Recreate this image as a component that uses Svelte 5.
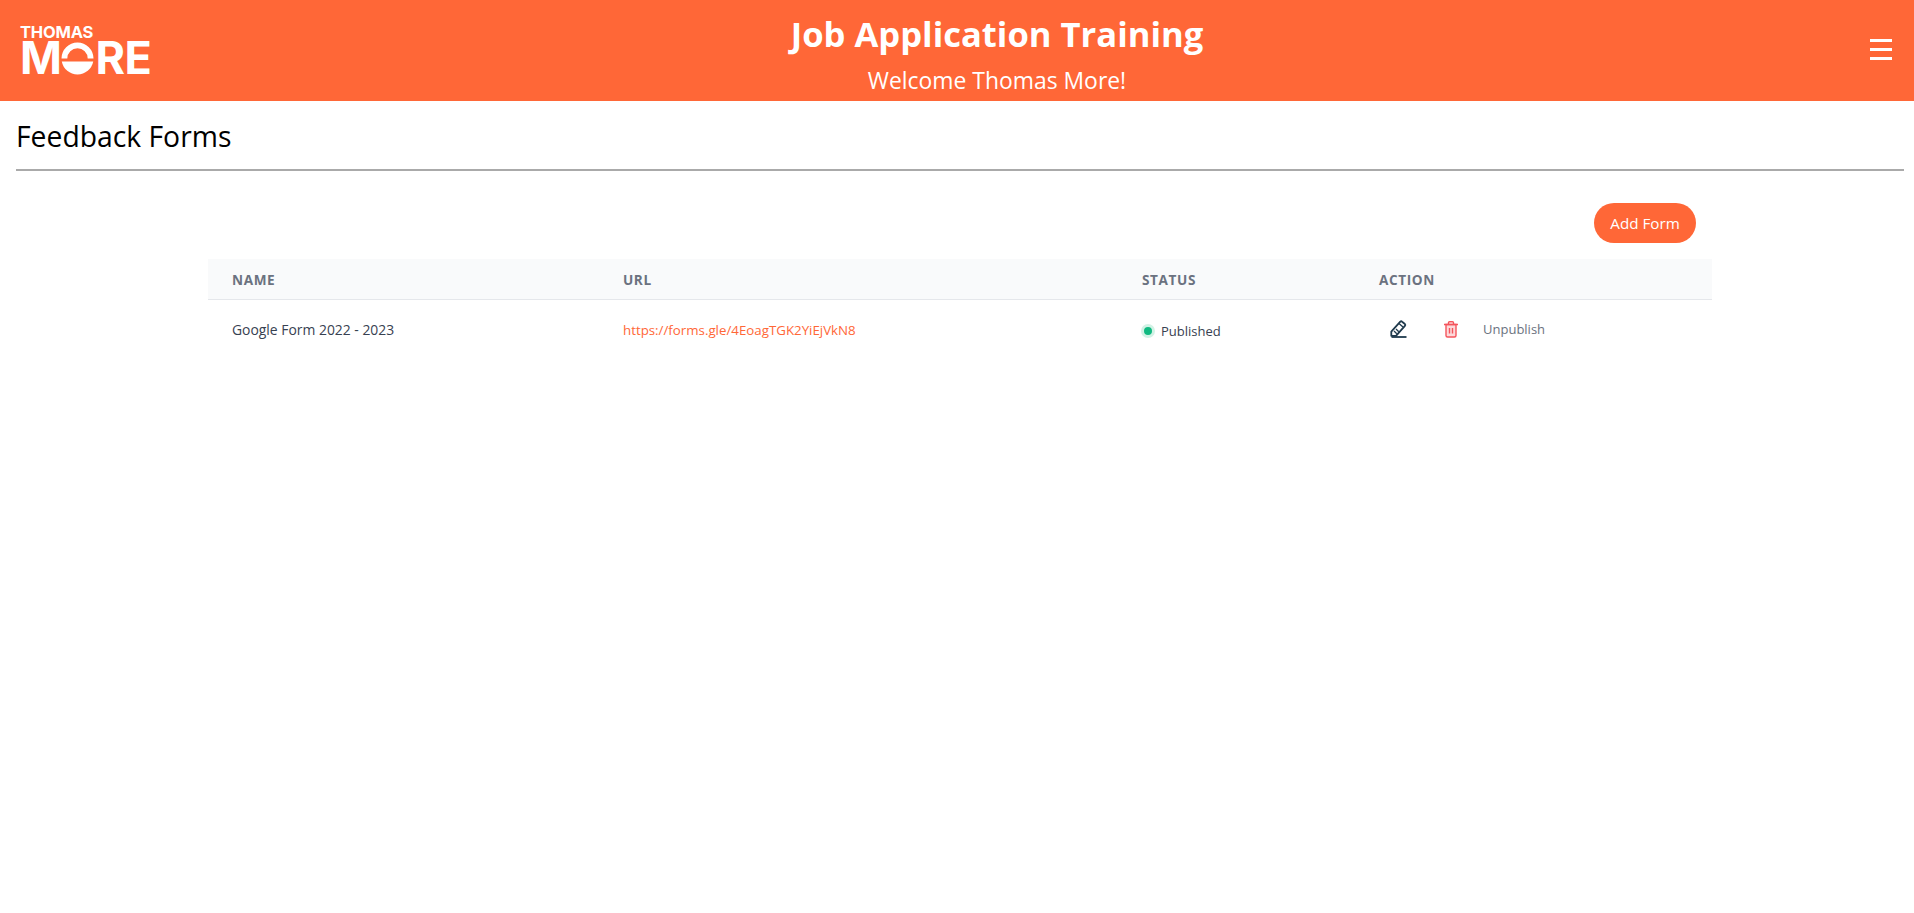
<script>
  const forms = [
    { name: 'Google Form 2022 - 2023', url: 'https://forms.gle/4EoagTGK2YiEjVkN8', status: 'Published' }
  ];
</script>

<header class="topbar">
  <div class="logo">
    <span class="logo-small">THOMAS</span>
    <span class="logo-big">
      <span class="m">M</span><svg class="logo-o" viewBox="0 0 34 34" aria-hidden="true">
        <path d="M3.500 17A13.500 13.500 0 0 1 30.500 17" fill="none" stroke="#fff" stroke-width="6" />
        <path d="M.8 20H33.200A16.500 16.500 0 0 1 .8 20z" fill="#fff" />
      </svg><span>RE</span>
    </span>
  </div>
  <div class="titles">
    <h1>Job Application Training</h1>
    <p>Welcome Thomas More!</p>
  </div>
  <button class="burger" aria-label="Menu">
    <span></span><span></span><span></span>
  </button>
</header>

<main>
  <h2 class="page-title">Feedback Forms</h2>
  <hr />

  <section class="content">
    <div class="toolbar">
      <button class="add-btn">Add Form</button>
    </div>

    <table>
      <thead>
        <tr>
          <th class="col-name">Name</th>
          <th class="col-url">Url</th>
          <th class="col-status">Status</th>
          <th>Action</th>
        </tr>
      </thead>
      <tbody>
        {#each forms as form}
          <tr>
            <td class="name">{form.name}</td>
            <td><a href={form.url}>{form.url}</a></td>
            <td>
              <span class="status"><i class="dot"></i>{form.status}</span>
            </td>
            <td>
              <div class="actions">
                <svg class="edit" viewBox="0 0 20 20" width="20" height="20" aria-hidden="true">
                  <path d="M3.300 12.700 12.300 2.700a1.300 1.300 0 0 1 1.800 0l2.800 2.300a1.300 1.300 0 0 1 0 1.800l-8.900 10H3.300z" fill="none" stroke="#1f3a4d" stroke-width="1.800" stroke-linejoin="round" />
                  <path d="M11 4.500l4 3.500M6 12l2.800 2.800M8 10l2.800 2.800" fill="none" stroke="#1f3a4d" stroke-width="1.300" />
                  <path d="M3.500 18h15" fill="none" stroke="#1f3a4d" stroke-width="1.800" />
                </svg>
                <svg class="trash" viewBox="0 0 20 20" width="20" height="20" aria-hidden="true">
                  <path d="M5 5.500h10v11a1.500 1.500 0 0 1-1.500 1.500h-7A1.500 1.500 0 0 1 5 16.500z" fill="#fdd9da" stroke="#f4545c" stroke-width="1.400" />
                  <path d="M3 5.500h14M7.500 5.500V3.700a1 1 0 0 1 1-1h3a1 1 0 0 1 1 1v1.800M8.500 9v5.500M11.500 9v5.500" fill="none" stroke="#f4545c" stroke-width="1.400" />
                </svg>
                <span class="unpublish">Unpublish</span>
              </div>
            </td>
          </tr>
        {/each}
      </tbody>
    </table>
  </section>
</main>

<style>
  :global(body) {
    background: #fff;
    font-family: "Open Sans", "Noto Sans", sans-serif;
  }

  .topbar {
    display: flex;
    align-items: flex-start;
    height: 101px;
    background: #ff6737;
    color: #fff;
    overflow: hidden;
  }

  .logo {
    width: 150px;
    flex: none;
    padding: 26px 0 0 20px;
    box-sizing: border-box;
    font-family: "Inter", sans-serif;
    font-weight: 700;
    line-height: 1;
  }

  .logo-small {
    display: block;
    font-size: 16.500px;
    height: 13px;
    line-height: 13px;
    letter-spacing: -0.2px;
  }

  .logo-big {
    display: flex;
    align-items: center;
    height: 34px;
    margin-top: 2px;
    font-size: 45px;
    line-height: 34px;
    letter-spacing: -0.5px;
  }

  .logo-o {
    flex: none;
    width: 33px;
    height: 33px;
    margin: 0 1px 0 0;
  }

  .titles {
    flex: 1;
    text-align: center;
  }

  h1 {
    margin: 11px 0 0;
    font-size: 34.600px;
    line-height: 46px;
    font-weight: 700;
  }

  .titles p {
    margin: 11px 0 0;
    font-size: 22.900px;
    line-height: 26px;
  }

  .burger {
    width: 70px;
    flex: none;
    height: 21px;
    margin-top: 39px;
    padding: 0;
    border: 0;
    background: none;
    display: flex;
    flex-direction: column;
    gap: 6px;
    align-items: flex-start;
  }

  .burger span {
    width: 22px;
    height: 3px;
    margin-left: 26px;
    background: #fff;
  }

  main {
    padding: 0 10px 0 16px;
  }

  .page-title {
    margin: 0;
    padding-top: 16px;
    font-size: 28.300px;
    line-height: 38px;
    font-weight: 400;
    color: #000;
  }

  hr {
    margin: 14px 0 0;
    border: 0;
    height: 2px;
    background: #aaa;
  }

  .content {
    width: 1504px;
    margin: 32px 0 0 192px;
  }

  .toolbar {
    display: flex;
    justify-content: flex-end;
    padding-right: 16px;
    margin-bottom: 16px;
  }

  .add-btn {
    width: 102px;
    height: 40px;
    border: 0;
    border-radius: 20px;
    background: #ff6737;
    color: #fff;
    font-family: inherit;
    font-size: 15.200px;
  }

  table {
    width: 100%;
    border-collapse: collapse;
    table-layout: fixed;
  }

  thead tr {
    background: #f9fafb;
    border-bottom: 1px solid #e5e7eb;
  }

  th {
    height: 40px;
    padding: 0 0 0 24px;
    text-align: left;
    font-size: 13.600px;
    font-weight: 700;
    letter-spacing: 0.6px;
    text-transform: uppercase;
    color: #6b7280;
  }

  .col-name { width: 367px; }
  .col-url { width: 495px; }
  .col-status { width: 213px; }

  td {
    height: 58px;
    padding: 0 0 2px 24px;
    font-size: 13px;
    color: #374151;
  }

  td.name {
    font-size: 13.900px;
    padding-bottom: 3px;
  }

  a {
    color: #ff6737;
    font-size: 13.300px;
    text-decoration: none;
  }

  .status {
    display: flex;
    align-items: center;
    gap: 6px;
    padding-top: 2px;
  }

  .dot {
    flex: none;
    width: 8px;
    height: 8px;
    border-radius: 50%;
    background: #10b981;
    border: 3px solid #d1f2e5;
    margin-left: -1px;
  }

  .actions {
    display: flex;
    align-items: center;
    padding-left: 9px;
    margin-top: -2px;
  }

  .edit { margin-right: 33px; }
  .trash { margin-right: 22px; }

  .unpublish {
    color: #6b7280;
  }
</style>
